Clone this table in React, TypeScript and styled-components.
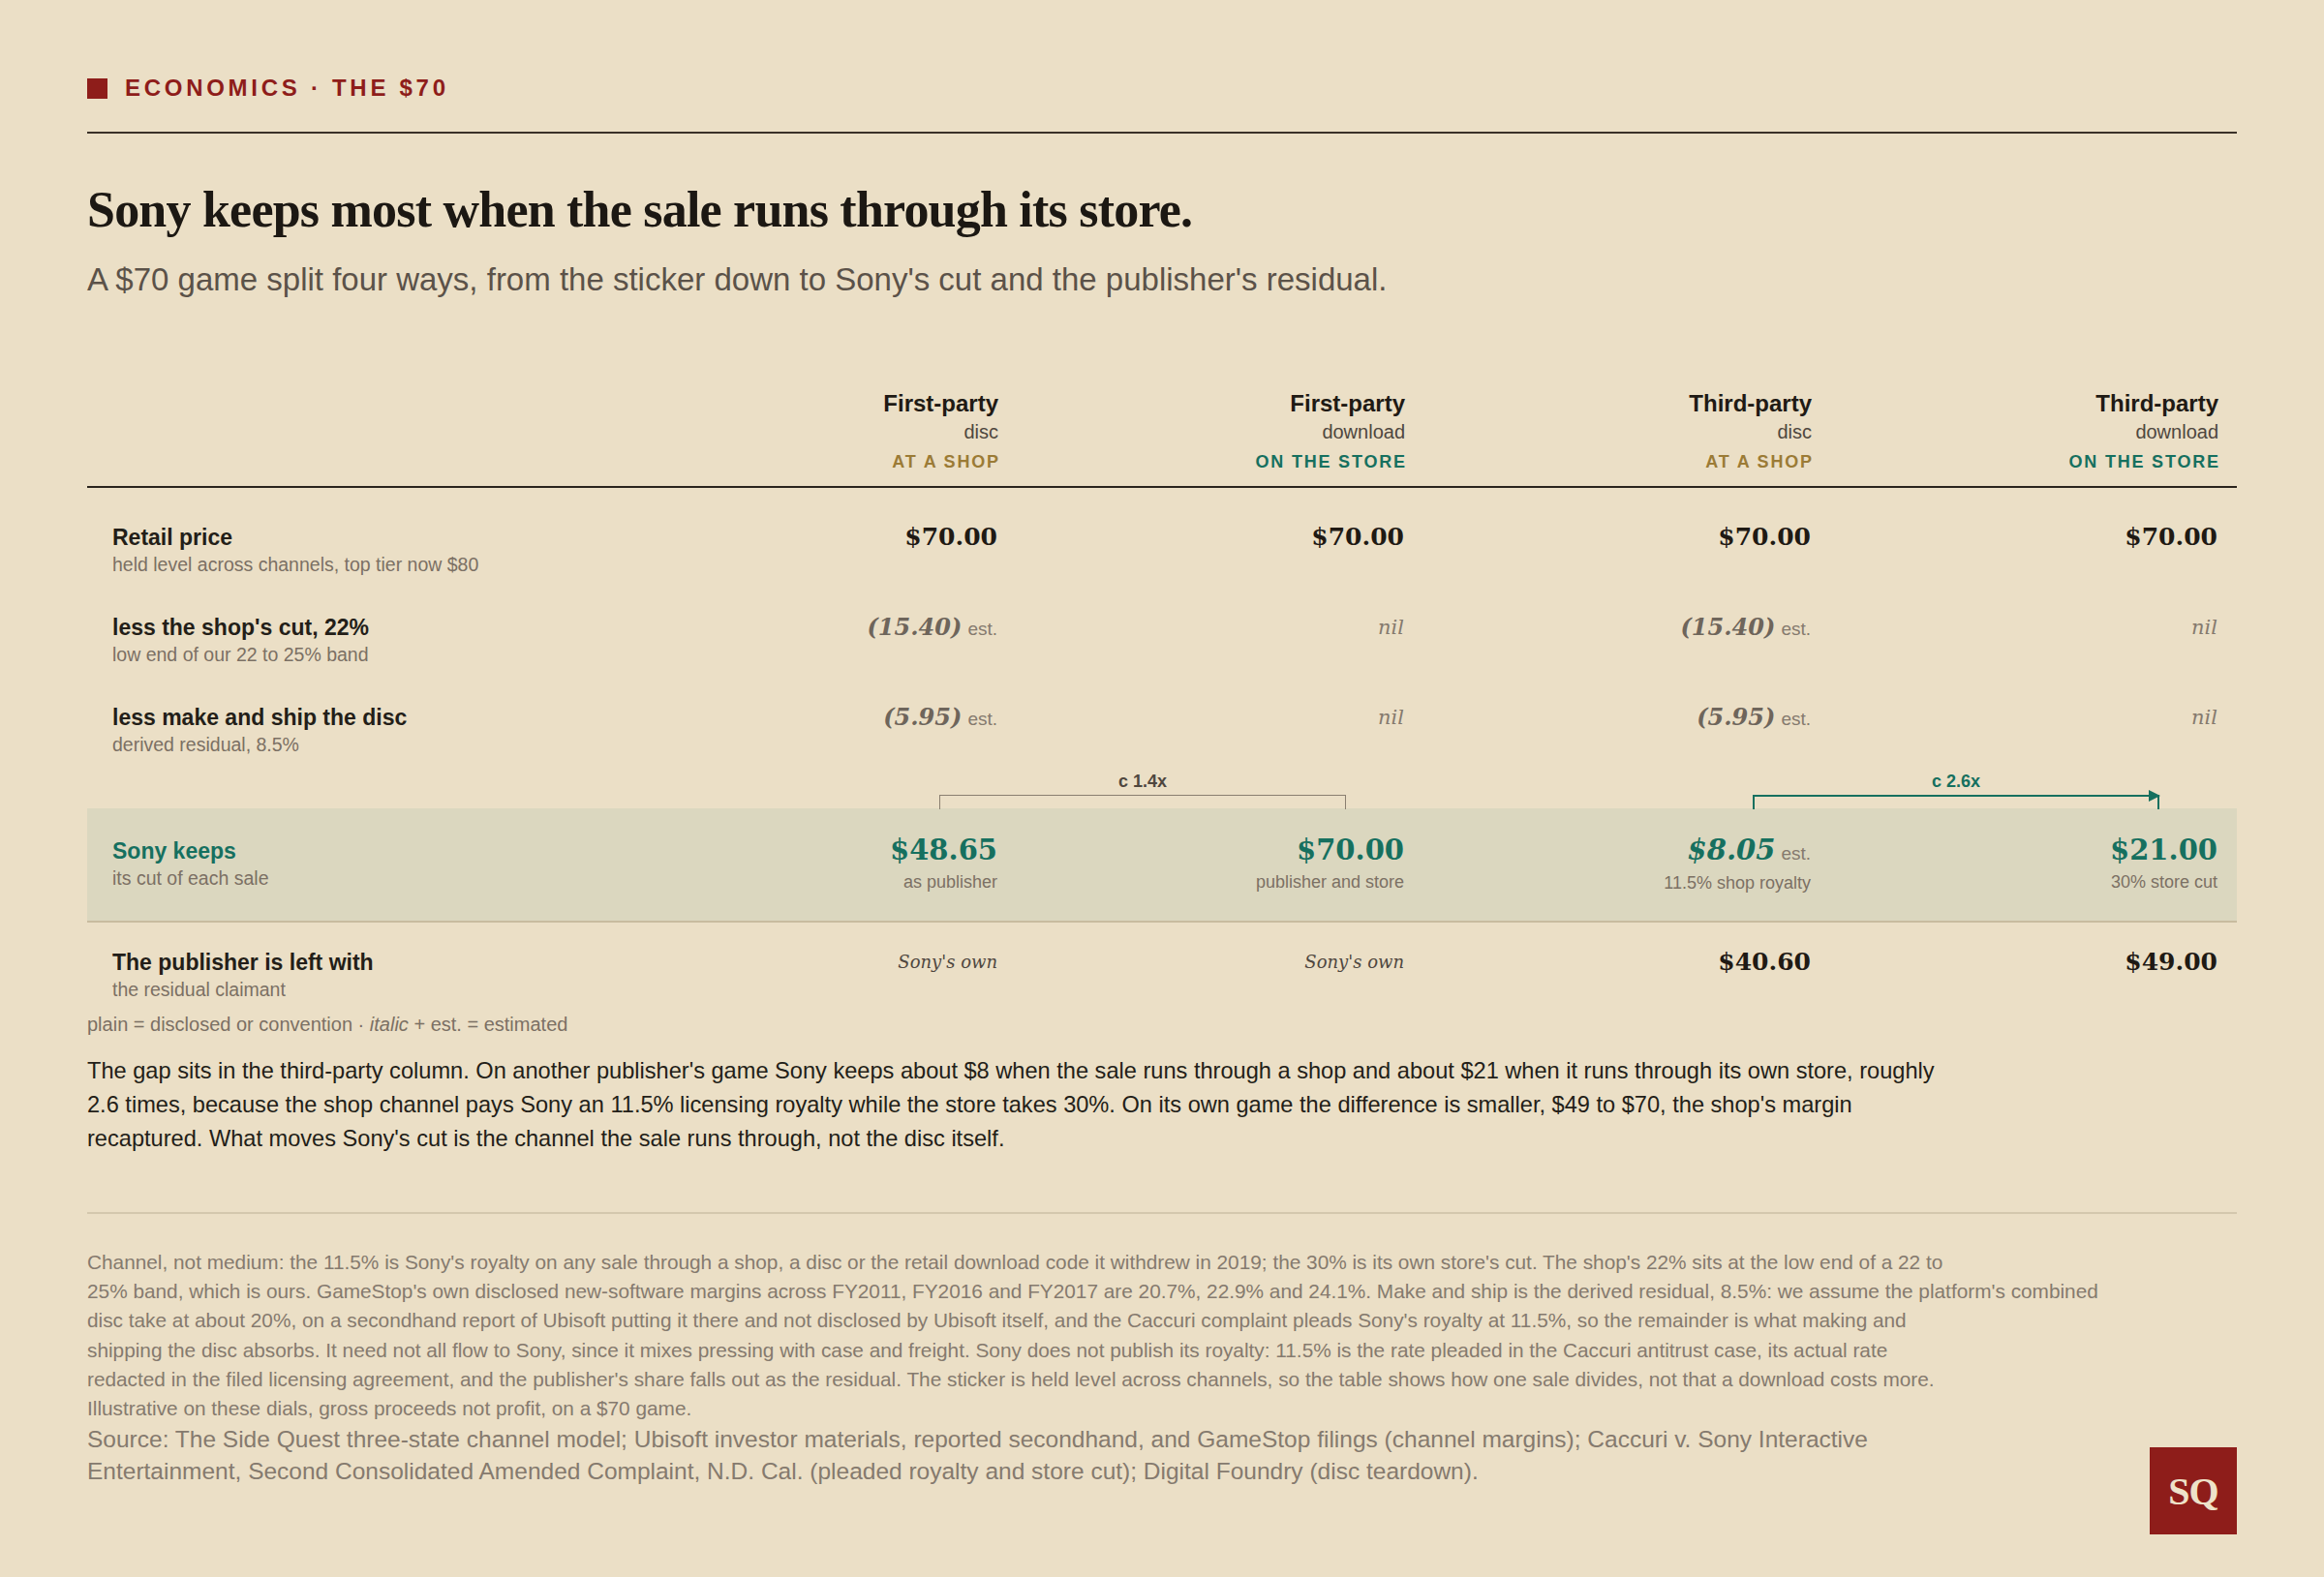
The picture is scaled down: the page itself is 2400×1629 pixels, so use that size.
import styled, { createGlobalStyle } from 'styled-components';

const GlobalStyle = createGlobalStyle`
  html, body {
    margin: 0;
    padding: 0;
    background: #ebdfc6;
  }
  body {
    font-family: "Liberation Sans", Arial, sans-serif;
    color: #231e18;
  }
`;

const SANS = '"Liberation Sans", Arial, sans-serif';
const SERIF = '"DejaVu Serif", "Liberation Serif", serif';

type Tone = 'shop' | 'store';

interface Column {
	party: string;
	medium: string;
	channel: string;
	tone: Tone;
}

const columns: Column[] = [
	{ party: 'First-party', medium: 'disc', channel: 'AT A SHOP', tone: 'shop' },
	{ party: 'First-party', medium: 'download', channel: 'ON THE STORE', tone: 'store' },
	{ party: 'Third-party', medium: 'disc', channel: 'AT A SHOP', tone: 'shop' },
	{ party: 'Third-party', medium: 'download', channel: 'ON THE STORE', tone: 'store' },
];

type Cell =
	| { kind: 'money'; text: string }
	| { kind: 'est'; text: string }
	| { kind: 'nil' }
	| { kind: 'own' };

interface Row {
	label: string;
	sub: string;
	cells: Cell[];
}

const rows: Row[] = [
	{
		label: 'Retail price',
		sub: 'held level across channels, top tier now $80',
		cells: [
			{ kind: 'money', text: '$70.00' },
			{ kind: 'money', text: '$70.00' },
			{ kind: 'money', text: '$70.00' },
			{ kind: 'money', text: '$70.00' },
		],
	},
	{
		label: "less the shop's cut, 22%",
		sub: 'low end of our 22 to 25% band',
		cells: [
			{ kind: 'est', text: '(15.40)' },
			{ kind: 'nil' },
			{ kind: 'est', text: '(15.40)' },
			{ kind: 'nil' },
		],
	},
	{
		label: 'less make and ship the disc',
		sub: 'derived residual, 8.5%',
		cells: [
			{ kind: 'est', text: '(5.95)' },
			{ kind: 'nil' },
			{ kind: 'est', text: '(5.95)' },
			{ kind: 'nil' },
		],
	},
];

const keeps = [
	{ value: '$48.65', note: 'as publisher', est: false },
	{ value: '$70.00', note: 'publisher and store', est: false },
	{ value: '$8.05', note: '11.5% shop royalty', est: true },
	{ value: '$21.00', note: '30% store cut', est: false },
];

const publisher: Cell[] = [
	{ kind: 'own' },
	{ kind: 'own' },
	{ kind: 'money', text: '$40.60' },
	{ kind: 'money', text: '$49.00' },
];

const paragraph = [
	"The gap sits in the third-party column. On another publisher's game Sony keeps about $8 when the sale runs through a shop and about $21 when it runs through its own store, roughly",
	"2.6 times, because the shop channel pays Sony an 11.5% licensing royalty while the store takes 30%. On its own game the difference is smaller, $49 to $70, the shop's margin",
	"recaptured. What moves Sony's cut is the channel the sale runs through, not the disc itself.",
];

const notes = [
	"Channel, not medium: the 11.5% is Sony's royalty on any sale through a shop, a disc or the retail download code it withdrew in 2019; the 30% is its own store's cut. The shop's 22% sits at the low end of a 22 to",
	"25% band, which is ours. GameStop's own disclosed new-software margins across FY2011, FY2016 and FY2017 are 20.7%, 22.9% and 24.1%. Make and ship is the derived residual, 8.5%: we assume the platform's combined",
	"disc take at about 20%, on a secondhand report of Ubisoft putting it there and not disclosed by Ubisoft itself, and the Caccuri complaint pleads Sony's royalty at 11.5%, so the remainder is what making and",
	"shipping the disc absorbs. It need not all flow to Sony, since it mixes pressing with case and freight. Sony does not publish its royalty: 11.5% is the rate pleaded in the Caccuri antitrust case, its actual rate",
	"redacted in the filed licensing agreement, and the publisher's share falls out as the residual. The sticker is held level across channels, so the table shows how one sale divides, not that a download costs more.",
	'Illustrative on these dials, gross proceeds not profit, on a $70 game.',
];

const sources = [
	'Source: The Side Quest three-state channel model; Ubisoft investor materials, reported secondhand, and GameStop filings (channel margins); Caccuri v. Sony Interactive',
	'Entertainment, Second Consolidated Amended Complaint, N.D. Cal. (pleaded royalty and store cut); Digital Foundry (disc teardown).',
];

function renderCell(cell: Cell) {
	switch (cell.kind) {
		case 'money':
			return <Money>{cell.text}</Money>;
		case 'est':
			return (
				<Inline>
					<Estimate>{cell.text}</Estimate>
					<Est>est.</Est>
				</Inline>
			);
		case 'nil':
			return <Nil>nil</Nil>;
		case 'own':
			return <Own>Sony's own</Own>;
	}
}

export default function App() {
	return (
		<>
			<GlobalStyle />
			<Page>
				<Kicker>
					<KickerMark />
					<KickerText>ECONOMICS · THE $70</KickerText>
				</Kicker>
				<TopRule />

				<Headline>Sony keeps most when the sale runs through its store.</Headline>
				<Dek>A $70 game split four ways, from the sticker down to Sony's cut and the publisher's residual.</Dek>

				<HeadRow>
					<span />
					{columns.map((c, i) => (
						<HeadCell key={i}>
							<Party>{c.party}</Party>
							<Medium>{c.medium}</Medium>
							<Channel tone={c.tone}>{c.channel}</Channel>
						</HeadCell>
					))}
				</HeadRow>

				<Body>
					{rows.map(r => (
						<DataRow key={r.label}>
							<LabelCell>
								<Label>{r.label}</Label>
								<Sub>{r.sub}</Sub>
							</LabelCell>
							{r.cells.map((c, i) => (
								<ValueCell key={i}>{renderCell(c)}</ValueCell>
							))}
						</DataRow>
					))}

					<BracketRow>
						<Bracket from={2}>
							<BracketLabel>c 1.4x</BracketLabel>
							<BracketLine />
						</Bracket>
						<Bracket from={4} accent>
							<BracketLabel accent>c 2.6x</BracketLabel>
							<BracketLine accent />
						</Bracket>
					</BracketRow>

					<KeepsRow>
						<KeepsLabel>
							<Label accent>Sony keeps</Label>
							<Sub>its cut of each sale</Sub>
						</KeepsLabel>
						{keeps.map((k, i) => (
							<ValueCell key={i}>
								<Inline>
									<KeepValue italic={k.est}>{k.value}</KeepValue>
									{k.est && <Est>est.</Est>}
								</Inline>
								<KeepNote>{k.note}</KeepNote>
							</ValueCell>
						))}
					</KeepsRow>

					<PublisherRow>
						<LabelCell>
							<Label>The publisher is left with</Label>
							<Sub>the residual claimant</Sub>
						</LabelCell>
						{publisher.map((c, i) => (
							<ValueCell key={i}>{renderCell(c)}</ValueCell>
						))}
					</PublisherRow>
				</Body>

				<Legend>
					plain = disclosed or convention · <em>italic</em> + est. = estimated
				</Legend>

				<Paragraph>
					{paragraph.map((l, i) => (
						<Line key={i}>{l}</Line>
					))}
				</Paragraph>

				<SoftRule />

				<Footer>
					<FootText>
						<Notes>
							{notes.map((l, i) => (
								<Line key={i}>{l}</Line>
							))}
						</Notes>
						<Sources>
							{sources.map((l, i) => (
								<Line key={i}>{l}</Line>
							))}
						</Sources>
					</FootText>
					<Logo>SQ</Logo>
				</Footer>
			</Page>
		</>
	);
}

// Styled Components

const Page = styled.div`
  box-sizing: border-box;
  width: 2400px;
  min-height: 1629px;
  padding: 79px 90px 45px;
  background: #ebdfc6;
`;

const Kicker = styled.div`
  display: flex;
  align-items: center;
  gap: 18px;
  height: 24px;
`;

const KickerMark = styled.span`
  width: 21px;
  height: 21px;
  background: #8e1d1a;
`;

const KickerText = styled.span`
  font-family: ${SANS};
  font-weight: 700;
  font-size: 24px;
  letter-spacing: 0.155em;
  color: #8e1d1a;
`;

const TopRule = styled.hr`
  margin: 33px 0 0;
  border: none;
  height: 2px;
  background: #3a3128;
`;

const Headline = styled.h1`
  margin: 50px 0 0;
  font-family: "Liberation Serif", serif;
  font-weight: 700;
  font-size: 52px;
  line-height: 58px;
  letter-spacing: -0.015em;
  color: #1c1813;
`;

const Dek = styled.p`
  margin: 23px 0 0;
  font-family: ${SANS};
  font-size: 33px;
  line-height: 40px;
  color: #5b5249;
`;

const Grid = styled.div`
  display: grid;
  grid-template-columns: 540px repeat(4, 420px);
`;

const HeadRow = styled(Grid)`
  margin-top: 93px;
  padding-bottom: 12px;
  border-bottom: 2px solid #2a241d;
`;

const HeadCell = styled.div`
  display: flex;
  flex-direction: column;
  align-items: flex-end;
  padding-right: 19px;
  font-family: ${SANS};
`;

const Party = styled.span`
  font-weight: 700;
  font-size: 24px;
  line-height: 30px;
  color: #1f1a14;
`;

const Medium = styled.span`
  font-size: 20px;
  line-height: 28px;
  color: #4f473f;
`;

const Channel = styled.span<{ tone: Tone }>`
  margin-top: 4px;
  font-weight: 700;
  font-size: 18px;
  line-height: 26px;
  letter-spacing: 0.1em;
  margin-right: -0.1em;
  color: ${({ tone }) => (tone === 'shop' ? '#9b7b36' : '#16705f')};
`;

const Body = styled.div`
  padding-top: 18px;
`;

const DataRow = styled(Grid)`
  padding: 18px 0;
`;

const LabelCell = styled.div`
  display: flex;
  flex-direction: column;
  padding-left: 26px;
  font-family: ${SANS};
`;

const KeepsLabel = styled(LabelCell)`
  padding-top: 4px;
`;

const Label = styled.span<{ accent?: boolean }>`
  font-weight: 700;
  font-size: 23px;
  line-height: 30px;
  color: ${({ accent }) => (accent ? '#16705f' : '#231e18')};
`;

const Sub = styled.span`
  font-size: 19.5px;
  line-height: 27px;
  color: #7b7064;
`;

const ValueCell = styled.div`
  display: flex;
  flex-direction: column;
  align-items: flex-end;
  padding-right: 20px;
  line-height: 30px;
`;

const Inline = styled.div`
  display: flex;
  align-items: baseline;
`;

const Money = styled.span`
  font-family: ${SERIF};
  font-weight: 700;
  font-size: 25px;
  line-height: 30px;
  color: #1f1a14;
`;

const Estimate = styled.span`
  font-family: ${SERIF};
  font-style: italic;
  font-weight: 700;
  font-size: 24px;
  line-height: 30px;
  color: #6e655b;
`;

const Est = styled.span`
  margin-left: 6px;
  font-family: ${SANS};
  font-size: 19px;
  color: #857a6e;
`;

const Nil = styled.span`
  font-family: ${SERIF};
  font-style: italic;
  font-size: 21px;
  line-height: 30px;
  color: #857a6e;
`;

const Own = styled.span`
  font-family: ${SERIF};
  font-style: italic;
  font-size: 18px;
  line-height: 30px;
  color: #4f473f;
`;

const BracketRow = styled(Grid)`
  height: 38px;
  margin-top: -4px;
  align-items: end;
`;

const Bracket = styled.div<{ from: number; accent?: boolean }>`
  grid-column: ${({ from }) => `${from} / ${from + 2}`};
  margin: 0 80px 0 340px;
  display: flex;
  flex-direction: column;
  align-items: center;
`;

const BracketLabel = styled.span<{ accent?: boolean }>`
  font-family: ${SANS};
  font-weight: 700;
  font-size: 18px;
  line-height: 20px;
  color: ${({ accent }) => (accent ? '#16705f' : '#4f473f')};
`;

const BracketLine = styled.div<{ accent?: boolean }>`
  position: relative;
  box-sizing: border-box;
  align-self: stretch;
  height: 15px;
  margin-top: 4px;
  border: ${({ accent }) => (accent ? '2.5px solid #16705f' : '1.5px solid #8a7f70')};
  border-bottom: none;

  ${({ accent }) =>
		accent &&
		`
    &::after {
      content: '';
      position: absolute;
      right: -3px;
      top: -7px;
      border-left: 12px solid #16705f;
      border-top: 6px solid transparent;
      border-bottom: 6px solid transparent;
    }
  `}
`;

const KeepsRow = styled(Grid)`
  padding: 25px 0 27px;
  background: #dbd7bf;
  border-bottom: 2px solid #c8bc9f;
`;

const KeepValue = styled.span<{ italic: boolean }>`
  font-family: ${SERIF};
  font-weight: 700;
  font-style: ${({ italic }) => (italic ? 'italic' : 'normal')};
  font-size: 29px;
  line-height: 36px;
  color: #16705f;
`;

const KeepNote = styled.span`
  margin-top: 3px;
  font-family: ${SANS};
  font-size: 18px;
  line-height: 24px;
  color: #7b7064;
`;

const PublisherRow = styled(Grid)`
  padding: 26px 0 10px;
`;

const Legend = styled.div`
  font-family: ${SANS};
  font-size: 20px;
  line-height: 24px;
  color: #7b7064;

  em {
    font-style: italic;
  }
`;

const Paragraph = styled.p`
  margin: 19px 0 0;
  font-family: ${SANS};
  font-size: 23.6px;
  line-height: 35px;
  color: #231e18;
`;

const Line = styled.span`
  display: block;
  white-space: nowrap;
`;

const SoftRule = styled.hr`
  margin: 58px 0 0;
  border: none;
  height: 2px;
  background: #d3c7ad;
`;

const Footer = styled.div`
  display: flex;
  justify-content: space-between;
  align-items: flex-end;
  margin-top: 35px;
`;

const FootText = styled.div`
  padding-bottom: 49px;
  font-family: ${SANS};
  color: #857a6e;
`;

const Notes = styled.div`
  font-size: 20.8px;
  line-height: 30.2px;
`;

const Sources = styled.div`
  font-size: 24.5px;
  line-height: 33px;
`;

const Logo = styled.div`
  display: flex;
  align-items: center;
  justify-content: center;
  width: 90px;
  height: 90px;
  background: #8e1d1a;
  color: #eee2c9;
  font-family: "Liberation Serif", serif;
  font-weight: 700;
  font-size: 40px;
  letter-spacing: -1px;
`;
